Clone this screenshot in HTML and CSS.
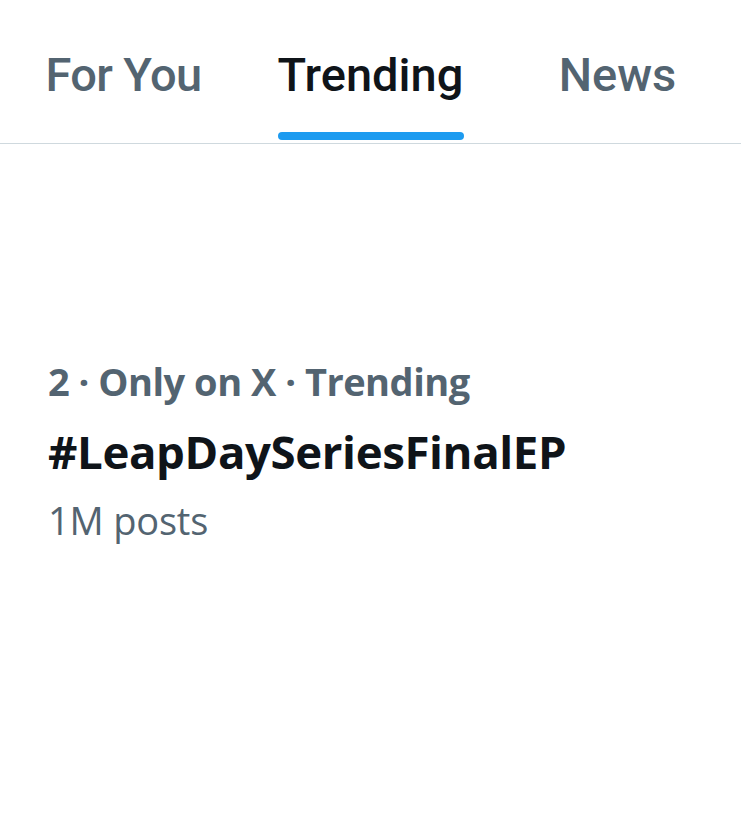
FILE: index.html
```html
<!DOCTYPE html>
<html>
<head>
<meta charset="utf-8">
<link rel="stylesheet" href="styles.css">
</head>
<body>
<nav class="tabs">
  <div class="tab"><span class="tab-label">For You</span></div>
  <div class="tab active"><span class="tab-label">Trending</span><span class="indicator"></span></div>
  <div class="tab"><span class="tab-label">News</span></div>
</nav>
<main class="feed">
  <div class="trend">
    <div class="meta">2 · Only on X · Trending</div>
    <div class="tag">#LeapDaySeriesFinalEP</div>
    <div class="count">1M posts</div>
  </div>
</main>
</body>
</html>
```
FILE: styles.css
```css
html, body {
  margin: 0;
  padding: 0;
  background: #ffffff;
}
body {
  width: 741px;
  height: 820px;
  overflow: hidden;
}
.tabs {
  display: flex;
  height: 143px;
  border-bottom: 1px solid #cfd9de;
}
.tab {
  flex: 1;
  display: flex;
  flex-direction: column;
  align-items: center;
  padding-top: 46px;
  font-family: Roboto, "Liberation Sans", sans-serif;
  font-weight: 500;
  font-size: 47px;
  line-height: 58px;
  color: #536471;
  letter-spacing: 0;
}
.tab:first-child .tab-label {
  letter-spacing: -0.6px;
}
.tab.active {
  color: #0f1419;
}
.indicator {
  display: block;
  width: 186px;
  height: 8px;
  margin-top: 28px;
  background: #1d9bf0;
  border-radius: 4px;
}
.feed {
  padding: 212px 48px 0;
}
.trend {
  font-family: "Open Sans", "Noto Sans", sans-serif;
}
.meta {
  font-size: 38px;
  font-weight: 700;
  color: #536471;
  line-height: 50px;
  letter-spacing: -0.5px;
}
.tag {
  margin-top: 8px;
  font-size: 45.6px;
  font-weight: 700;
  color: #0f1419;
  line-height: 74px;
  letter-spacing: -0.4px;
}
.count {
  font-size: 38px;
  font-weight: 400;
  color: #536471;
  line-height: 64px;
  letter-spacing: -0.2px;
}
```
